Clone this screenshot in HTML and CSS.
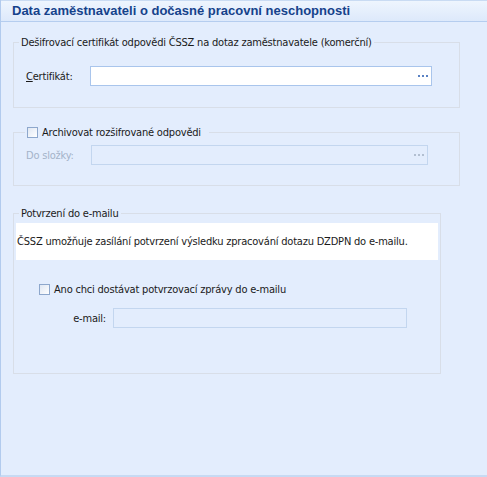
FILE: index.html
```html
<!DOCTYPE html>
<html lang="cs">
<head>
<meta charset="utf-8">
<title>Data zaměstnavateli o dočasné pracovní neschopnosti</title>
<link rel="stylesheet" href="styles.css">
</head>
<body>
<div class="window">
  <div class="header">Data zaměstnavateli o dočasné pracovní neschopnosti</div>
  <div class="content">
    <fieldset class="group g1">
      <legend class="legend">Dešifrovací certifikát odpovědi ČSSZ na dotaz zaměstnavatele (komerční)</legend>
      <div class="row r1">
        <label class="label"><u>C</u>ertifikát:</label>
        <div class="input i1"><span class="dots"><i></i><i></i><i></i></span></div>
      </div>
    </fieldset>

    <fieldset class="group g2">
      <legend class="legend chk-legend"><span class="checkbox"></span><span>Archivovat rozšifrované odpovědi</span></legend>
      <div class="row r2">
        <label class="label disabled">Do složky:</label>
        <div class="input i2 off"><span class="dots grey"><i></i><i></i><i></i></span></div>
      </div>
    </fieldset>

    <fieldset class="group g3">
      <legend class="legend">Potvrzení do e-mailu</legend>
      <div class="info">ČSSZ umožňuje zasílání potvrzení výsledku zpracování dotazu DZDPN do e-mailu.</div>
      <div class="chk-row"><span class="checkbox"></span><span>Ano chci dostávat potvrzovací zprávy do e-mailu</span></div>
      <div class="row r3">
        <label class="label mail">e-mail:</label>
        <div class="input i3 off"></div>
      </div>
    </fieldset>
  </div>
</div>
</body>
</html>
```

FILE: styles.css
```css
html, body {
  margin: 0;
  padding: 0;
}
body {
  background: #e3edfd;
  font-family: "DejaVu Sans Condensed", "Liberation Sans", sans-serif;
  font-size: 11px;
  letter-spacing: -0.2px;
  color: #1a1a1a;
}
.window {
  height: 477px;
  box-sizing: border-box;
  border-left: 1px solid #b2cbee;
  border-bottom: 2px solid #c7daf3;
  background: #e3edfd;
}
.header {
  height: 20px;
  border-top: 1px solid #c9dbf3;
  border-bottom: 1px solid #b5cdef;
  background: linear-gradient(#eef5fe, #dde9fb);
  color: #15428b;
  font-family: "Liberation Sans", sans-serif;
  font-weight: bold;
  font-size: 13px;
  letter-spacing: 0;
  line-height: 20px;
  padding-left: 11px;
}
.content {
  padding-left: 12px;
  padding-top: 14px;
}
.group {
  margin: 0;
  border: 1px solid #d8dee8;
  padding: 0;
  min-width: 0;
}
.legend {
  line-height: 13px;
  padding: 0 2px;
  margin-left: 5px;
}
.g1 {
  width: 445px;
  padding: 17px 0 21px 0;
}
.row {
  display: flex;
  align-items: center;
  padding-left: 12px;
}
.label {
  width: 64px;
  flex: none;
}
.label.disabled {
  color: #a4b3c9;
  width: 65px;
}
.input {
  height: 18px;
  border: 1px solid #a9c5ec;
  background: #ffffff;
  display: flex;
  align-items: center;
  justify-content: flex-end;
}
.input.off {
  background: #e3edfd;
  border-color: #c3d6ef;
}
.i1 {
  width: 340px;
}
.i2 {
  width: 335px;
}
.i3 {
  width: 292px;
}
.dots {
  display: flex;
  gap: 2px;
  margin-right: 3px;
}
.dots i {
  width: 2px;
  height: 2px;
  background: #5a82c4;
}
.dots.grey i {
  background: #b2bfd1;
}
.g2 {
  margin-top: 18px;
  padding: 6px 0 20px 0;
  width: 445px;
}
.chk-legend {
  display: flex;
  align-items: center;
  gap: 4px;
  margin-left: 11px;
  padding: 0 8px 0 2px;
}
.checkbox {
  width: 9px;
  height: 9px;
  border: 1px solid #8da7cc;
  background: linear-gradient(135deg, #dfe7f3, #ffffff);
  display: inline-block;
  flex: none;
}
.g3 {
  margin-top: 21px;
  width: 428px;
  padding: 3px 0 45px 0;
  box-sizing: border-box;
}
.info {
  background: #ffffff;
  margin: 0 2px;
  height: 37px;
  line-height: 37px;
  padding-left: 1px;
}
.chk-row {
  display: flex;
  align-items: center;
  gap: 4px;
  margin-top: 23px;
  margin-left: 25px;
}
.r3 {
  margin-top: 12px;
  padding-left: 0;
}
.label.mail {
  width: 92px;
  text-align: right;
  padding-right: 7px;
}
```
